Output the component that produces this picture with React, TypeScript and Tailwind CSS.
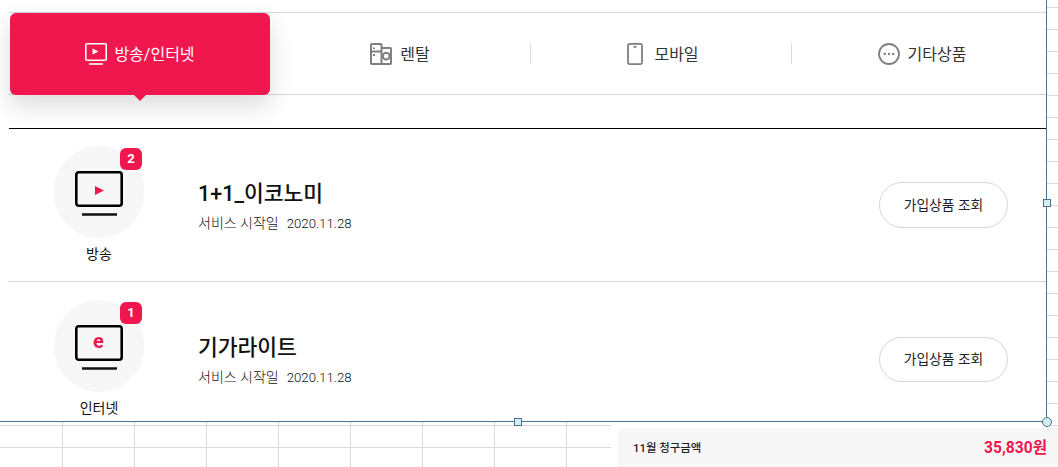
const FONT = "font-['Roboto','Noto_Sans_CJK_KR',sans-serif]";

const TABS = [
  { label: '렌탈', icon: <RentalIcon />, colClass: 'w-[260px]', innerClass: 'gap-[8px]' },
  { label: '모바일', icon: <MobileIcon />, colClass: 'w-[261px]', innerClass: 'gap-[11px] pl-[4px]' },
  { label: '기타상품', icon: <MoreIcon />, colClass: 'w-[261px]', innerClass: 'gap-[8px]' },
];

const ITEMS = [
  { label: '방송', count: 2, title: '1+1_이코노미', kind: 'tv', rowClass: 'h-[153px] pt-[17px] border-b border-[#d6d6d6]', btnClass: 'mt-[36px] h-[46px]' },
  { label: '인터넷', count: 1, title: '기가라이트', kind: 'net', rowClass: 'h-[139px] pt-[18px]', btnClass: 'mt-[37px] h-[45px]' },
];

function TvOutlineIcon() {
  return (
    <svg width="22" height="22" viewBox="0 0 22 22" fill="none" stroke="#fff" strokeWidth="1.6">
      <rect x="0.8" y="0.8" width="20.4" height="16.4" rx="1" />
      <path d="M4 21h14" />
      <path d="M7.5 5.5l6 3-6 3z" fill="#fff" stroke="none" />
    </svg>
  );
}

function RentalIcon() {
  return (
    <svg width="22" height="22" viewBox="0 0 22 22" fill="none" stroke="#7f7f7f" strokeWidth="2">
      <path d="M11.5 5V1.8a.8.8 0 0 0-.8-.8H1.8a.8.8 0 0 0-.8.8v18.4a.8.8 0 0 0 .8.8h18.4a.8.8 0 0 0 .8-.8V5.8a.8.8 0 0 0-.8-.8H11.5v16" />
      <path d="M1 8.5h10.5" />
      <circle cx="16.2" cy="13.2" r="3.4" />
      <path d="M4 4.5v1.5M4 11v2" />
    </svg>
  );
}

function MobileIcon() {
  return (
    <svg width="16" height="22" viewBox="0 0 16 22" fill="none" stroke="#7f7f7f" strokeWidth="1.8">
      <rect x="1" y="0.9" width="14" height="20.2" rx="1.5" />
      <path d="M6.5 3.8h3" />
    </svg>
  );
}

function MoreIcon() {
  return (
    <svg width="22" height="22" viewBox="0 0 22 22" fill="none">
      <circle cx="11" cy="11" r="10" stroke="#7f7f7f" strokeWidth="1.8" />
      <circle cx="6.8" cy="11" r="1.2" fill="#7f7f7f" />
      <circle cx="11" cy="11" r="1.2" fill="#7f7f7f" />
      <circle cx="15.2" cy="11" r="1.2" fill="#7f7f7f" />
    </svg>
  );
}

function ServiceIcon({ kind }: { kind: string }) {
  return (
    <svg width="48" height="46" viewBox="0 0 48 46" fill="none" className="mt-[4px]">
      <rect x="1.3" y="1.3" width="45.4" height="33.4" rx="2.5" stroke="#000" strokeWidth="2.6" />
      <path d="M7 43.5h35" stroke="#111" strokeWidth="2.6" />
      {kind === 'tv' && <path d="M20 15l9 4.5-9 4.5z" fill="#ef174d" />}
      {kind === 'net' && (
        <text x="23.5" y="23" textAnchor="middle" fontSize="20" fontWeight="700" fill="#ef174d" fontFamily="Roboto, sans-serif">e</text>
      )}
    </svg>
  );
}

function Gutter() {
  return (
    <div className="flex-1 flex flex-col">
      <div className="h-[8px] shrink-0 border-b border-[#dadada]" />
      {Array.from({ length: 19 }).map((_, i) => (
        <div key={i} className="h-[22px] shrink-0 border-b border-[#dadada]" />
      ))}
    </div>
  );
}

function SheetGrid() {
  return (
    <div className="w-[611px] grid grid-cols-[63px_repeat(7,72px)_44px] grid-rows-[4px_22px_19px]">
      {Array.from({ length: 27 }).map((_, i) => (
        <div
          key={i}
          className={`border-[#d9d9d9] ${(i + 1) % 9 === 0 ? '' : 'border-r'} ${i < 18 ? 'border-b' : ''}`}
        />
      ))}
    </div>
  );
}

export default function App() {
  return (
    <div className={`relative w-[1058px] h-[467px] overflow-hidden bg-white text-[#111] ${FONT}`}>
      <div className="flex h-[422px]">
        <div className="w-[1047px] shrink-0 h-full border-r border-b border-[#4f7190] pt-[12px] pl-[9px] overflow-hidden">
          {/* tab bar */}
          <div className="flex h-[83px] border-y border-[#d6d6d6]">
            <div className="relative shrink-0 w-[260px] ml-px h-[82px] rounded-[6px] bg-[#ef174d] shadow-[0_10px_25px_rgba(0,0,0,0.15)] flex items-center justify-center gap-[7px] text-white text-[16px] z-10">
              <TvOutlineIcon />
              <span className="pt-[2px]">방송/인터넷</span>
              <span className="absolute left-[124px] -bottom-[6px] w-0 h-0 border-x-[6px] border-x-transparent border-t-[6px] border-t-[#ef174d]" />
            </div>
            {TABS.map((tab, i) => (
              <div key={tab.label} className={`${tab.colClass} shrink-0 flex items-center`}>
                {i > 0 && <span className="w-px h-[21px] bg-[#dcdcdc]" />}
                <div className={`${tab.innerClass} flex-1 flex items-center justify-center text-[16px] text-[#333]`}>
                  {tab.icon}
                  <span className="pt-[2px]">{tab.label}</span>
                </div>
              </div>
            ))}
          </div>

          <div className="mt-[33px] border-t border-black">
            {ITEMS.map(item => (
              <div key={item.label} className={`flex ${item.rowClass}`}>
                <div className="w-[180px] shrink-0 flex flex-col items-center">
                  <div className="relative w-[90px] h-[92px] rounded-full bg-[#f7f7f7] flex items-center justify-center">
                    <ServiceIcon kind={item.kind} />
                    <span className="absolute right-[2px] top-[2px] w-[22px] h-[22px] rounded-[6px] bg-[#ef174d] text-white text-[13px] font-bold flex items-center justify-center">
                      {item.count}
                    </span>
                  </div>
                  <div className="mt-[7px] text-[14px] leading-[18px]">{item.label}</div>
                </div>
                <div className="flex-1 pl-[9px] pt-[34px]">
                  <div className="text-[21.5px] leading-[28px] font-medium text-[#111]">{item.title}</div>
                  <div className="mt-[6px] text-[14px] leading-[18px] font-light text-[#111] flex items-baseline gap-[8px]">
                    <span>서비스 시작일</span>
                    <span className="text-[13.2px]">2020.11.28</span>
                  </div>
                </div>
                <button className={`${item.btnClass} mr-[38px] w-[129px] rounded-full border border-[#d6d6d6] text-[13.8px] text-[#222]`}>
                  가입상품 조회
                </button>
              </div>
            ))}
          </div>
        </div>
        <Gutter />
      </div>

      <div className="flex h-[45px]">
        <SheetGrid />
        <div className="ml-[7px] mt-[6px] flex-1 rounded-tl-[6px] bg-[#f7f7f7] flex items-center justify-between pl-[15px] pr-[11px] pt-[3px]">
          <span className="text-[11.4px] font-medium text-[#222]">11월 청구금액</span>
          <span className="text-[15.6px] font-bold text-[#ef174d]">35,830원</span>
        </div>
      </div>

      {/* selection handles of the pasted picture */}
      <span className="absolute left-[1043px] top-[199px] w-[8px] h-[8px] border border-[#4f7190] bg-[#d3eef2]" />
      <span className="absolute left-[514px] top-[418px] w-[8px] h-[8px] border border-[#4f7190] bg-[#d3eef2]" />
      <span className="absolute left-[1042px] top-[417px] w-[10px] h-[10px] rounded-full border border-[#4f7190] bg-[#d3eef2]" />
    </div>
  );
}
